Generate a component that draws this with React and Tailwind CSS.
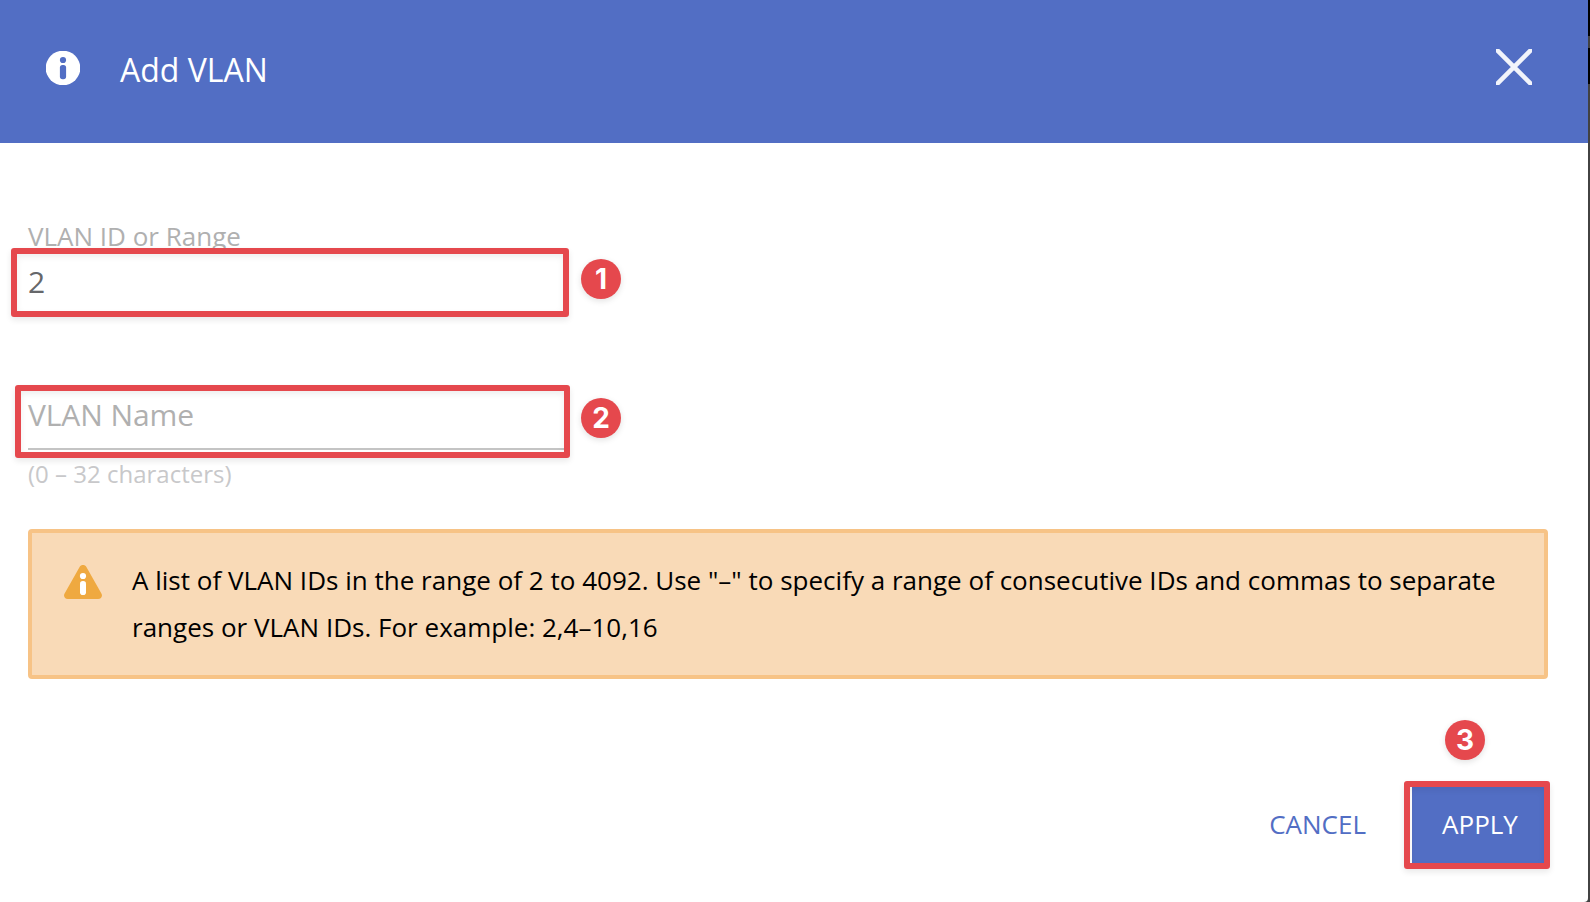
function Marker({ n, className }) {
  return (
    <span
      className={`absolute flex size-10 items-center justify-center rounded-full bg-[#e5484d] font-['Inter',sans-serif] text-[28px] leading-none font-bold text-white shadow-[0_2px_6px_rgba(0,0,0,0.12)] ${className}`}
    >
      {n}
    </span>
  );
}

function Frame({ className }) {
  return (
    <span
      className={`pointer-events-none absolute rounded-[3px] border-[6px] border-[#e5484d] shadow-[0_3px_6px_rgba(0,0,0,0.09),inset_0_3px_6px_rgba(0,0,0,0.07)] ${className}`}
    />
  );
}

function InfoIcon() {
  return (
    <svg viewBox="0 0 34 34" className="size-[34px]" aria-hidden="true">
      <circle cx="17" cy="17" r="17.3" fill="#fff" />
      <circle cx="17" cy="9" r="3.1" fill="#526ec4" />
      <rect x="13.9" y="14" width="6.2" height="14.2" rx="2.6" fill="#526ec4" />
    </svg>
  );
}

function CloseIcon() {
  return (
    <svg viewBox="0 0 36 36" className="size-9" aria-hidden="true">
      <path d="M0 0L36 36M36 0L0 36" stroke="#f2f4fb" strokeWidth="4.6" fill="none" />
    </svg>
  );
}

function WarningIcon() {
  return (
    <svg viewBox="0 0 38 34" className="h-[34px] w-[38px] shrink-0" aria-hidden="true">
      <path
        d="M15.6 2C17.1-.6 20.9-.6 22.4 2L37.4 28.4C38.9 31 37.3 34 34.2 34H3.8C.7 34-.9 31 .6 28.4Z"
        fill="#efa940"
      />
      <circle cx="19" cy="11" r="3.1" fill="#fff" />
      <rect x="16" y="16" width="6" height="14" rx="2.8" fill="#fff" />
    </svg>
  );
}

export default function App() {
  return (
    <div className="flex h-[902px] w-[1590px] overflow-hidden bg-[#424242] font-['Open_Sans',sans-serif]">
      <div className="flex w-[1588px] flex-col rounded-br-[4px] bg-white">
        <header className="flex h-[143px] items-start bg-[#526ec4] pl-[46px] text-white">
          <div className="mt-[51px]">
            <InfoIcon />
          </div>
          <h1 className="mt-[49px] ml-10 text-[32px] leading-[42px]">Add VLAN</h1>
          <button className="mt-[49px] mr-14 ml-auto">
            <CloseIcon />
          </button>
        </header>

        <main className="flex flex-col px-7 pt-[75px]">
          <label className="h-9 text-[26px] leading-9 text-[#b0b0b0]">VLAN ID or Range</label>
          <div className="relative h-[55px] w-[536px]">
            <div className="text-[30px] leading-[55px] text-[#66676a]">2</div>
            <Frame className="top-[-6px] left-[-17.5px] h-[69px] w-[558.5px]" />
            <Marker n="1" className="top-[5px] left-[553px]" />
          </div>

          <div className="relative mt-[72px] h-[69px] w-[536px] border-b-2 border-[#c4c4c4]">
            <div className="text-[30px] leading-[67px] tracking-[-0.1px] text-[#b0b0b0]">VLAN Name</div>
            <Frame className="top-[4px] left-[-13px] h-[73px] w-[555px]" />
            <Marker n="2" className="top-[17px] left-[553px]" />
          </div>
          <p className="mt-1.5 text-[24px] leading-9 text-[#c8c8ca]">(0 – 32 characters)</p>

          <div className="mt-[37px] flex h-[150px] w-[1520px] rounded-[4px] border-4 border-[#f7c386] bg-[#f9dab7] pt-6 pl-8">
            <div className="mt-2">
              <WarningIcon />
            </div>
            <p className="ml-[30px] w-[1380px] text-[26px] leading-[47px] tracking-[0.01px] text-black">
              A list of VLAN IDs in the range of 2 to 4092. Use "–" to specify a range of consecutive IDs and commas to
              separate ranges or VLAN IDs. For example: 2,4–10,16
            </p>
          </div>
        </main>

        <footer className="mt-[106px] flex h-[78px] justify-end pr-[42px] text-[26px] leading-[78px]">
          <button className="mr-[17px] px-[29px] text-[#526ec4]">CANCEL</button>
          <div className="relative w-[134px] bg-[#526ec4] pl-[2px] text-center text-white">
            APPLY
            <Frame className="top-[-4px] left-[-8px] h-[88px] w-[146px]" />
            <Marker n="3" className="top-[-65px] left-[33px]" />
          </div>
        </footer>
      </div>
      <div className="flex w-0.5 flex-col">
        <div className="h-9 bg-black" />
        <div className="h-3 bg-[#424242]" />
        <div className="h-9 bg-black" />
      </div>
    </div>
  );
}
